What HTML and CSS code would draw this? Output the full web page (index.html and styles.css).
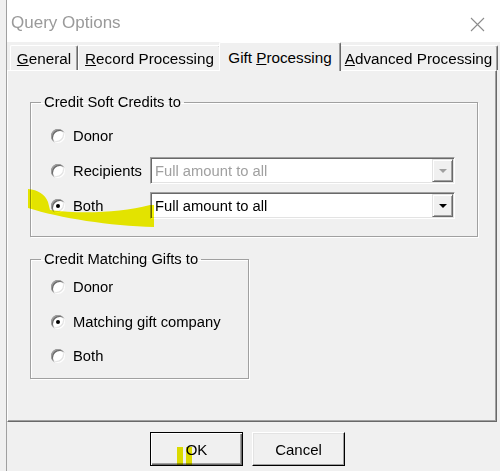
FILE: index.html
```html
<!DOCTYPE html>
<html lang="en">
<head>
    <meta charset="UTF-8">
    <title>Query Options</title>
    <link rel="stylesheet" href="styles.css">
</head>
<body>
    <div class="window">
        <div class="titlebar">
            <span class="title">Query Options</span>
            <svg class="close" width="15" height="15" viewBox="0 0 15 15">
                <path d="M1 1 L14 14 M14 1 L1 14" stroke="#8c8c8c" stroke-width="1.1" fill="none"/>
            </svg>
        </div>

        <div class="tabs">
            <div class="tab tab-general"><span><u>G</u>eneral</span></div>
            <div class="tab tab-record"><span><u>R</u>ecord Processing</span></div>
            <div class="tab tab-gift active"><span>Gift <u>P</u>rocessing</span></div>
            <div class="tab tab-advanced"><span><u>A</u>dvanced Processing</span></div>
        </div>

        <div class="panel">
            <fieldset class="group soft">
                <legend>Credit Soft Credits to</legend>
                <div class="option">
                    <label class="choice"><span class="radio"></span>Donor</label>
                </div>
                <div class="option">
                    <label class="choice"><span class="radio"></span>Recipients</label>
                    <div class="combo disabled">
                        <span class="combo-text">Full amount to all</span>
                        <span class="combo-btn"><span class="arrow"></span></span>
                    </div>
                </div>
                <div class="option">
                    <label class="choice"><span class="radio checked"></span>Both</label>
                    <div class="combo">
                        <span class="combo-text">Full amount to all</span>
                        <span class="combo-btn"><span class="arrow"></span></span>
                    </div>
                </div>
            </fieldset>

            <fieldset class="group matching">
                <legend>Credit Matching Gifts to</legend>
                <div class="option">
                    <label class="choice"><span class="radio"></span>Donor</label>
                </div>
                <div class="option">
                    <label class="choice"><span class="radio checked"></span>Matching gift company</label>
                </div>
                <div class="option">
                    <label class="choice"><span class="radio"></span>Both</label>
                </div>
            </fieldset>
        </div>

        <div class="buttons">
            <button class="btn default">OK</button>
            <button class="btn">Cancel</button>
        </div>
    </div>

    <!-- highlighter marks drawn over the screenshot -->
    <svg class="marker" width="500" height="471" viewBox="0 0 500 471">
        <path d="M28 189 C38 190 45 194 48 202 L50 210 C80 214 120 213 150 205 L154 205 L154 227 C110 226 60 218 28 208 Z" fill="#f2f200"/>
        <rect x="177" y="447" width="6" height="19" fill="#e8e800"/>
        <rect x="186" y="447" width="6" height="19" fill="#e8e800"/>
    </svg>
</body>
</html>
```

FILE: styles.css
```css
/* Classic dialog look */
body {
    margin: 0;
    background: #f0f0f0;
    font-family: "Liberation Sans", Arial, sans-serif;
    font-size: 14.75px;
    color: #000;
    position: relative;
    width: 500px;
    height: 471px;
    overflow: hidden;
}

.window {
    margin-left: 6px;
    border-left: 1px solid #a0a0a0;
    height: 471px;
    background: #f0f0f0;
}

.titlebar {
    height: 42px;
    background: #fff;
    display: flex;
    align-items: center;
    justify-content: space-between;
    padding: 0 15px 0 4px;
}

.title {
    font-size: 17px;
    color: #9a9a9a;
    padding-top: 4px;
}

.close {
    margin-top: 6px;
}

/* Tabs */
.tabs {
    display: flex;
    align-items: flex-end;
    height: 28px;
    padding-left: 3px;
}

.tab {
    box-sizing: border-box;
    height: 25px;
    display: flex;
    align-items: center;
    justify-content: center;
    border-top: 1px solid #fff;
    border-left: 1px solid #fff;
    border-right: 1px solid #696969;
    border-radius: 2px 2px 0 0;
    box-shadow: inset -1px 0 0 #a0a0a0;
    white-space: nowrap;
    font-size: 15.25px;
}

.tab-general { width: 68px; }
.tab-record { width: 143px; }
.tab-gift { width: 116px; }
.tab-advanced { width: 159px; }

.tab.active {
    height: 29px;
    margin: 0 -2px -1px;
    width: 122px;
    position: relative;
    z-index: 1;
    background: #f0f0f0;
}

/* Tab page */
.panel {
    box-sizing: border-box;
    width: 490px;
    height: 352px;
    border-top: 1px solid #fff;
    border-left: 1px solid #fff;
    border-right: 1px solid #696969;
    border-bottom: 1px solid #696969;
    box-shadow: inset -1px -1px 0 #a0a0a0;
}

.group {
    box-sizing: border-box;
    margin: 23px 0 0 22px;
    padding: 0 0 0 20px;
    border: 1px solid #a0a0a0;
    box-shadow: inset 1px 1px 0 #fff, 1px 1px 0 #fff;
}

.group legend {
    margin-left: -10px;
    padding: 0 3px;
    line-height: 17px;
}

.soft {
    width: 448px;
    padding-top: 7px;
    padding-bottom: 13px;
}

.matching {
    width: 219px;
    margin-top: 14px;
    padding-top: 2px;
    padding-bottom: 4px;
}

.option {
    display: flex;
    align-items: center;
    height: 35px;
}

.matching .option {
    height: 34.5px;
}

.choice {
    display: flex;
    align-items: center;
    gap: 8px;
    width: 99px;
    white-space: nowrap;
}

.radio {
    position: relative;
    flex: none;
    width: 14px;
    height: 14px;
    border-radius: 50%;
    background: #fff;
    box-shadow: inset 1px 1px 0 #a0a0a0, inset 2px 2px 0 #696969, inset -1px -1px 0 #fff, inset -2px -2px 0 #e3e3e3;
}

.radio.checked::after {
    content: "";
    position: absolute;
    left: 5px;
    top: 5px;
    width: 4px;
    height: 4px;
    border-radius: 50%;
    background: #000;
}

/* Combo boxes */
.combo {
    box-sizing: border-box;
    width: 305px;
    height: 27px;
    display: flex;
    align-items: center;
    justify-content: space-between;
    background: #fff;
    border: 1px solid;
    border-color: #a0a0a0 #fff #fff #a0a0a0;
    box-shadow: inset 1px 1px 0 #696969, inset -1px -1px 0 #e3e3e3;
    padding: 1px 1px 1px 4px;
}

.combo.disabled .combo-text {
    color: #a0a0a0;
}

.combo-btn {
    box-sizing: border-box;
    width: 21px;
    height: 23px;
    display: flex;
    align-items: center;
    justify-content: center;
    background: #f0f0f0;
    border: 1px solid;
    border-color: #e3e3e3 #696969 #696969 #e3e3e3;
    box-shadow: inset 1px 1px 0 #fff, inset -1px -1px 0 #a0a0a0;
}

.arrow {
    width: 0;
    height: 0;
    border-left: 4px solid transparent;
    border-right: 4px solid transparent;
    border-top: 4px solid #000;
    margin-top: 1px;
}

.disabled .arrow {
    border-top-color: #a0a0a0;
}

/* Buttons */
.buttons {
    display: flex;
    gap: 9px;
    padding: 10px 0 0 143px;
}

.btn {
    box-sizing: border-box;
    width: 93px;
    height: 34px;
    font-family: inherit;
    font-size: 15px;
    background: #f0f0f0;
    border: 1px solid;
    border-color: #fff #000 #000 #fff;
    box-shadow: inset -1px -1px 0 #a0a0a0, inset 1px 1px 0 #e3e3e3;
    padding: 0;
}

.btn.default {
    border-color: #000;
    box-shadow: inset 1px 1px 0 #fff, inset -1px -1px 0 #696969, inset -2px -2px 0 #a0a0a0;
}

.marker {
    position: absolute;
    left: 0;
    top: 0;
    pointer-events: none;
    mix-blend-mode: multiply;
}
```
